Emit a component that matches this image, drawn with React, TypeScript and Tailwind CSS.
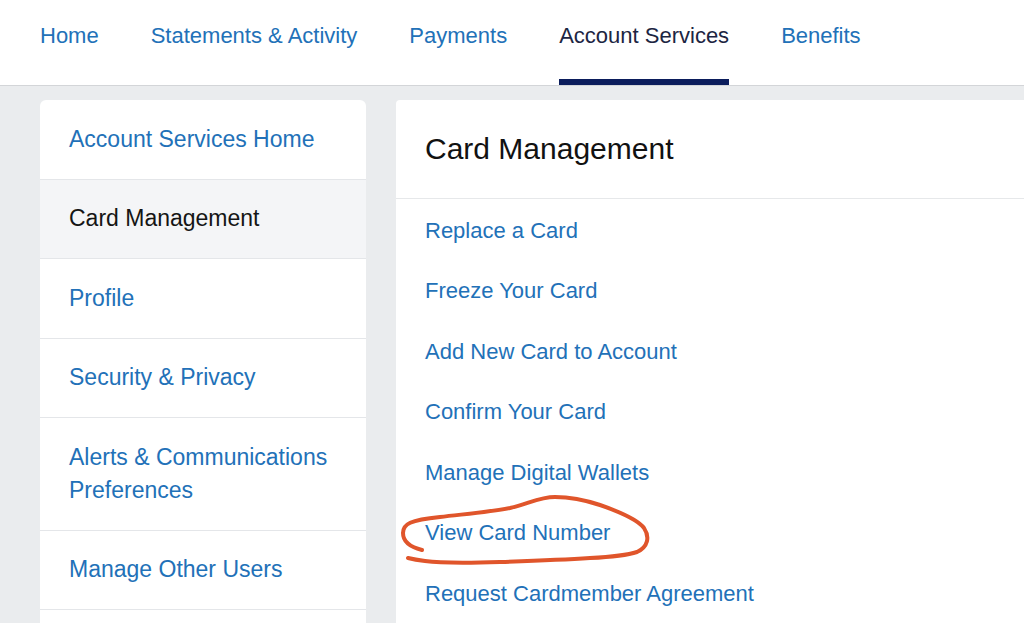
import React from 'react';

const blue = 'text-[#2271b8]';

const tabs = [
  { label: 'Home', active: false },
  { label: 'Statements & Activity', active: false },
  { label: 'Payments', active: false },
  { label: 'Account Services', active: true },
  { label: 'Benefits', active: false },
];

const sideItems = [
  { label: 'Account Services Home', active: false },
  { label: 'Card Management', active: true },
  { label: 'Profile', active: false },
  { label: 'Security & Privacy', active: false },
  { label: 'Alerts & Communications Preferences', active: false },
  { label: 'Manage Other Users', active: false },
];

const links = [
  'Replace a Card',
  'Freeze Your Card',
  'Add New Card to Account',
  'Confirm Your Card',
  'Manage Digital Wallets',
  'View Card Number',
  'Request Cardmember Agreement',
];

export default function App() {
  return (
    <div className="relative h-[623px] w-[1024px] overflow-hidden bg-[#eaecee] font-['Liberation_Sans',Arial,sans-serif]">
      {/* Top nav */}
      <header className="h-[86px] bg-white border-b border-[#d3d5d8]">
        <nav className="flex h-full gap-[52px] pl-[40px]">
          {tabs.map(t => (
            <a
              key={t.label}
              className={`flex h-full flex-col text-[22px] ${t.active ? 'text-[#1c2542]' : blue}`}
            >
              <span className="flex flex-1 items-center pb-[8px] leading-none">{t.label}</span>
              <span className={`h-[6px] ${t.active ? 'bg-[#0b1d5c]' : 'bg-transparent'}`} />
            </a>
          ))}
        </nav>
      </header>

      <div className="flex gap-[30px] pl-[40px] pt-[14px]">
        {/* Sidebar */}
        <aside className="w-[326px] shrink-0 overflow-hidden rounded-t-[6px] bg-white">
          {sideItems.map(s => (
            <div
              key={s.label}
              className={`border-b border-[#e4e6e9] px-[29px] py-[22.75px] text-[23px] leading-[33px] ${
                s.active ? 'bg-[#f4f5f7] text-[#151515]' : blue
              }`}
            >
              {s.label}
            </div>
          ))}
          <div className="h-[40px]" />
        </aside>

        {/* Main panel */}
        <main className="min-w-0 flex-1 rounded-tl-[4px] bg-white">
          <div className="flex h-[99px] items-center border-b border-[#e6e8ea] px-[29px]">
            <h1 className="text-[30px] leading-none text-[#111]">Card Management</h1>
          </div>
          <ul className="px-[29px] pt-[1.5px]">
            {links.map(l => (
              <li key={l} className={`text-[22px] leading-[60.5px] ${blue}`}>
                {l}
              </li>
            ))}
          </ul>
        </main>
      </div>

      {/* hand-drawn circle annotation */}
      <svg
        className="pointer-events-none absolute left-0 top-0"
        width="1024"
        height="623"
        viewBox="0 0 1024 623"
        fill="none"
      >
        <path
          d="M422,550 C410,547 403,541 403,533 C403,524 410,520 440,517 C465,514 490,512 510,508 C530,503 540,497 555,497 C570,497 585,500 600,505 C620,512 638,520 644,528 C650,537 648,547 637,552 C625,556 610,557 590,558 C560,560 530,561 500,562 C470,563 440,563 425,561 C417,560 412,559 408,558"
          stroke="#e0552b"
          strokeWidth="4"
          strokeLinecap="round"
          strokeLinejoin="round"
        />
      </svg>
    </div>
  );
}
